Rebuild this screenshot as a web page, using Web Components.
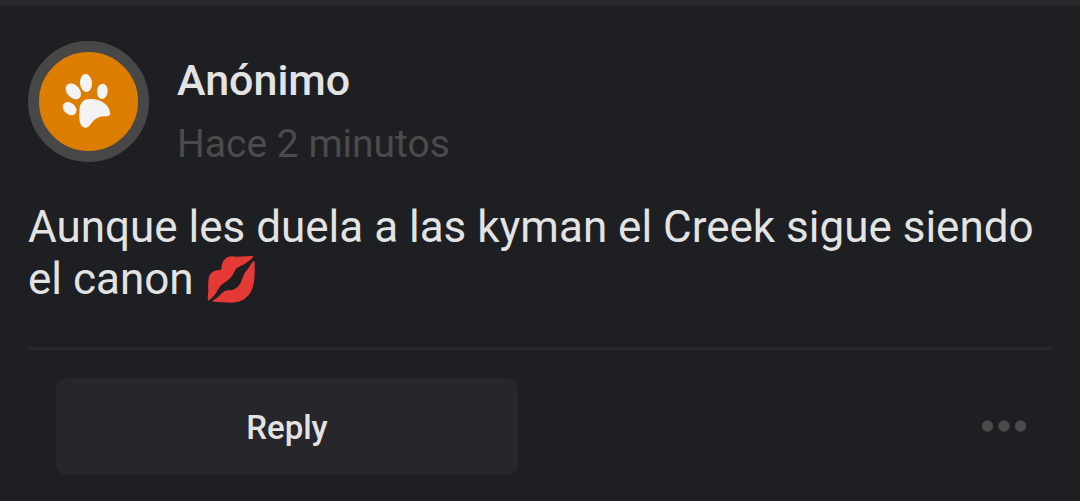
<!DOCTYPE html>
<html lang="es">
<head>
<meta charset="utf-8">
<meta name="viewport" content="width=device-width, initial-scale=1">
<title>Comentario</title>
<style>
  body { margin: 0; min-height: 100vh; background: #1e1f23; color: #e3e3e3; font-family: Roboto, "Liberation Sans", sans-serif; }
</style>
</head>
<body>
<comment-card>
  <comment-author slot="author">
    <paw-avatar slot="avatar"></paw-avatar>
    <span slot="name">Anónimo</span>
    <span slot="time">Hace 2 minutos</span>
  </comment-author>
  <span slot="text">Aunque les duela a las kyman el Creek sigue siendo el canon <kiss-emoji></kiss-emoji></span>
  <comment-actions slot="actions">Reply</comment-actions>
</comment-card>
<script>
const define = (name, markup) => {
  const template = document.createElement('template');
  template.innerHTML = markup;
  customElements.define(name, class extends HTMLElement {
    constructor() {
      super();
      this.attachShadow({ mode: 'open' }).append(template.content.cloneNode(true));
    }
  });
};

define('paw-avatar', `
  <style>
    :host { display: block; box-sizing: border-box; width: 121px; height: 121px; border: 11px solid #474747; border-radius: 50%; background: #de7e00; }
    svg { display: block; width: 100%; height: 100%; }
  </style>
  <svg viewBox="-33 -42 297 297" fill="#f3f3f3" aria-hidden="true">
    <ellipse cx="108" cy="51" rx="18" ry="27" transform="rotate(-5 108 51)"/>
    <ellipse cx="70" cy="76" rx="19" ry="27" transform="rotate(-43 70 76)"/>
    <ellipse cx="157" cy="76" rx="16" ry="23" transform="rotate(5 157 76)"/>
    <ellipse cx="59" cy="128" rx="17" ry="23" transform="rotate(-50 59 128)"/>
    <path d="M89 129C90 108 102 99 122 99C150 98 176 115 180 138C182 150 175 151 164 151C144 152 134 159 125 171C118 181 112 186 104 185C91 183 87 165 88 148Z"/>
  </svg>`);

define('kiss-emoji', `
  <style>
    :host { display: inline-block; vertical-align: -9px; margin-left: 2px; }
    svg { display: block; width: 48px; height: 48px; }
  </style>
  <svg viewBox="36 30 144 144" fill="#e53935" role="img" aria-label="beso">
    <path d="M40 167C37 163 39 147 40 136C39 104 41 90 50 83C58 76 69 74 79 74C80 54 85 42 99 36C106 32 116 34 125 35L169 33C176 33 175 36 171 40C160 50 151 57 142 61C129 65 122 71 118 80C112 94 104 103 91 111C80 118 75 123 69 134C62 147 51 160 40 167Z"/>
    <path d="M55 166C68 159 75 149 85 141C93 134 102 137 111 135C125 132 134 121 139 109C145 93 147 84 156 75C164 66 169 53 175 48C180 46 179 55 179 66C180 99 177 126 165 145C151 165 131 173 109 173L56 170C52 170 51 168 55 166Z"/>
  </svg>`);

define('comment-author', `
  <style>
    :host { display: flex; align-items: flex-end; gap: 28px; }
    .lines { display: grid; gap: 26px; min-width: 0; }
    .name { font-size: 43px; line-height: 40px; font-weight: 500; }
    .time { font-size: 39px; line-height: 36px; color: #4b4b4b; }
  </style>
  <slot name="avatar"></slot>
  <div class="lines">
    <div class="name"><slot name="name"></slot></div>
    <div class="time"><slot name="time"></slot></div>
  </div>`);

define('comment-actions', `
  <style>
    :host { display: flex; align-items: center; justify-content: space-between; padding: 0 26px 0 28px; }
    button { font: inherit; color: inherit; border: 0; padding: 0; cursor: pointer; }
    .reply { width: 462px; max-width: 48%; height: 97px; padding-top: 2px; border-radius: 10px; background: #27262b; font-size: 33px; line-height: 40px; font-weight: 500; }
    .more { background: none; }
    .more svg { display: block; width: 46px; height: 14px; }
  </style>
  <button class="reply" type="button"><slot></slot></button>
  <button class="more" type="button" aria-label="Más opciones">
    <svg viewBox="0 0 46 14" fill="#4a4a4a" aria-hidden="true"><circle cx="6.500" cy="6" r="5.700"/><circle cx="23" cy="6" r="5.700"/><circle cx="39.500" cy="6" r="5.700"/></svg>
  </button>`);

define('comment-card', `
  <style>
    :host { display: block; border-top: 6px solid #27262b; padding: 35px 27px 26px 28px; }
    p { margin: 39px 0 0; font-size: 44px; line-height: 52px; }
    hr { margin: 42px 0 28px; border: 0; height: 3px; background: #27262b; }
  </style>
  <article>
    <slot name="author"></slot>
    <p><slot name="text"></slot></p>
    <hr>
    <slot name="actions"></slot>
  </article>`);
</script>
</body>
</html>
